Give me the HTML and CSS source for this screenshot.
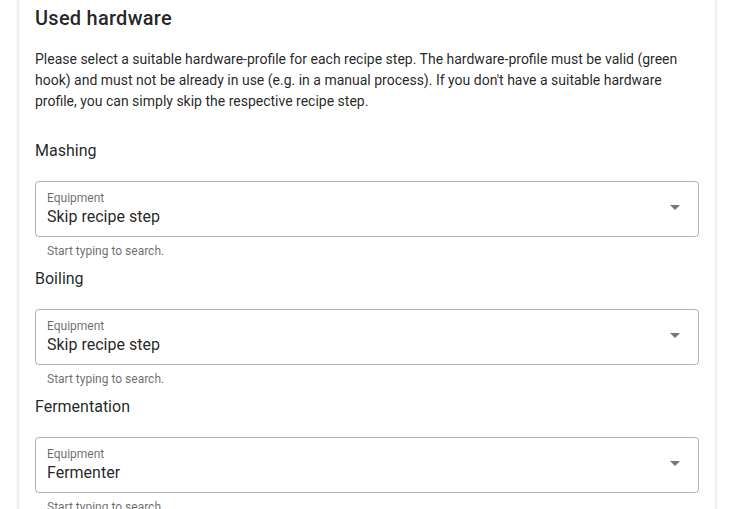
FILE: index.html
```html
<!DOCTYPE html>
<html lang="en">
<head>
    <meta name="viewport" content="width=device-width, initial-scale=1.0">
    <meta charset="UTF-8">
    <title>Used hardware</title>
    <link rel="stylesheet" href="styles.css">
</head>
<body>
    <div class="card">
        <h2 class="card-title">Used hardware</h2>
        <p class="intro">Please select a suitable hardware-profile for each recipe step. The hardware-profile must be valid (green hook) and must not be already in use (e.g. in a manual process). If you don't have a suitable hardware profile, you can simply skip the respective recipe step.</p>

        <div class="step">
            <div class="step-title">Mashing</div>
            <div class="field">
                <div class="field-text">
                    <label>Equipment</label>
                    <div class="value">Skip recipe step</div>
                </div>
                <svg class="arrow" width="24" height="24" viewBox="0 0 24 24"><path d="M7 10l5 5 5-5z"/></svg>
            </div>
            <div class="hint">Start typing to search.</div>
        </div>

        <div class="step">
            <div class="step-title">Boiling</div>
            <div class="field">
                <div class="field-text">
                    <label>Equipment</label>
                    <div class="value">Skip recipe step</div>
                </div>
                <svg class="arrow" width="24" height="24" viewBox="0 0 24 24"><path d="M7 10l5 5 5-5z"/></svg>
            </div>
            <div class="hint">Start typing to search.</div>
        </div>

        <div class="step">
            <div class="step-title">Fermentation</div>
            <div class="field">
                <div class="field-text">
                    <label>Equipment</label>
                    <div class="value">Fermenter</div>
                </div>
                <svg class="arrow" width="24" height="24" viewBox="0 0 24 24"><path d="M7 10l5 5 5-5z"/></svg>
            </div>
            <div class="hint">Start typing to search.</div>
        </div>
    </div>
</body>
</html>
```

FILE: styles.css
```css
body {
    font-family: Roboto, "Liberation Sans", sans-serif;
    margin: 0;
    background-color: #fff;
    color: rgba(0,0,0,0.87);
}
.card {
    width: 664px;
    margin: -10px 0 0 19px;
    padding: 12px 16px 16px 16px;
    background-color: #fff;
    border-radius: 4px;
    box-shadow: 0 3px 1px -2px rgba(0,0,0,0.2), 0 2px 2px 0 rgba(0,0,0,0.14), 0 1px 5px 0 rgba(0,0,0,0.12);
}
.card-title {
    margin: 0;
    font-size: 20px;
    font-weight: 500;
    line-height: 32px;
    letter-spacing: 0.0125em;
}
.intro {
    margin: 15px 0 0 0;
    font-size: 14px;
    line-height: 21px;
}
.step {
    margin-top: 27px;
}
.step + .step {
    margin-top: 8px;
}
.step-title {
    font-size: 16px;
    line-height: 24px;
    margin-bottom: 18px;
}
.field {
    display: flex;
    align-items: center;
    height: 54px;
    border: 1px solid rgba(0,0,0,0.3);
    border-radius: 4px;
    padding: 0 12px 0 11px;
}
.field-text {
    flex: 1;
}
.field label {
    display: block;
    font-size: 12px;
    line-height: 16px;
    color: rgba(0,0,0,0.6);
}
.value {
    font-size: 16px;
    line-height: 22px;
}
.arrow {
    fill: rgba(0,0,0,0.54);
    margin-right: -1px;
    margin-top: -4px;
}
.hint {
    font-size: 12px;
    line-height: 12px;
    color: rgba(0,0,0,0.6);
    padding: 8px 12px 0 12px;
    min-height: 14px;
}
```
